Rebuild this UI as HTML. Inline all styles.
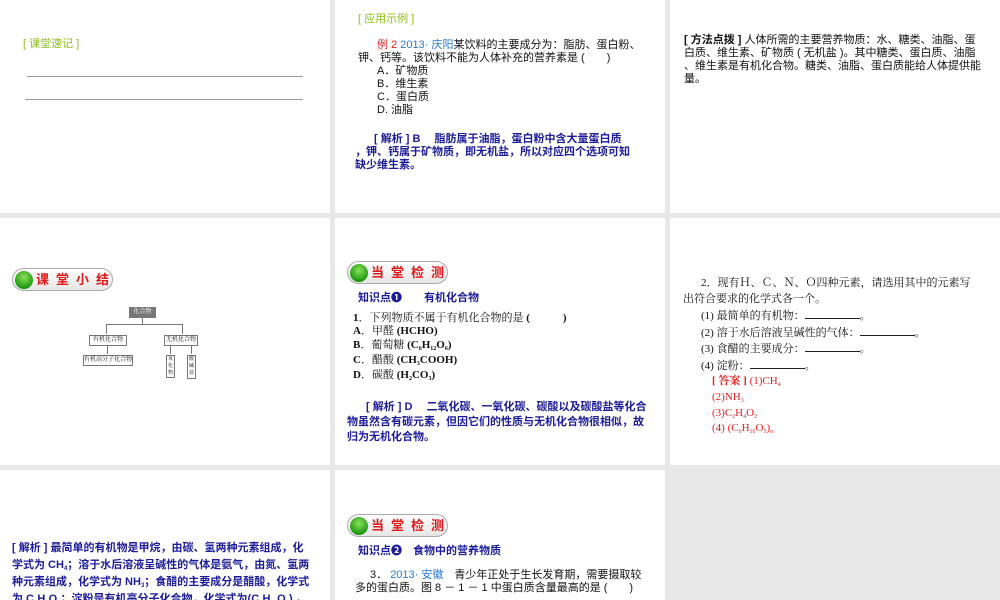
<!DOCTYPE html>
<html><head><meta charset="utf-8"><style>
*{margin:0;padding:0;box-sizing:border-box}
body{width:1000px;height:600px;background:#e8e8e8;position:relative;overflow:hidden;font-family:"Liberation Sans","Noto Sans CJK SC",sans-serif;font-size:11px;color:#111}
.s{position:absolute;background:#fff;overflow:hidden}
.t{position:absolute;white-space:nowrap;line-height:13px}
.b{color:#1c1c99;font-weight:bold}
.r{color:#e02020}
.g{color:#8cc21a}
.bl{color:#2a78d0}
.badge{position:absolute;width:101px;height:23px;border:1px solid #aaa;border-radius:12px;background:linear-gradient(#fff,#e6e6e6)}
.badge .c{position:absolute;left:2px;top:2px;width:18px;height:18px;border-radius:50%;background:radial-gradient(circle at 50% 35%,#8be05a,#1f9a10 70%,#0d6a08)}
.badge span{position:absolute;left:23px;top:3px;color:#e01818;font-weight:bold;font-size:13px;letter-spacing:7px;line-height:16px;white-space:nowrap}
.box{position:absolute;border:1px solid #777;font-size:6px;text-align:center;line-height:8px;background:#fff;font-family:"Liberation Serif","Noto Serif CJK SC",serif;white-space:nowrap}
.ln{position:absolute;background:#777}
sub{font-size:6px;vertical-align:-2px}
u{text-decoration:none;border-bottom:1px solid #222;display:inline-block;width:55px;height:10px}
</style></head><body>
<!-- slide 1 -->
<div class="s" style="left:0;top:0;width:330px;height:213px">
<div class="t g" style="left:23px;top:38px">[ 课堂速记 ]</div>
<div style="position:absolute;left:27px;top:76px;width:276px;height:1px;background:#999"></div>
<div style="position:absolute;left:25px;top:99px;width:278px;height:1px;background:#999"></div>
</div>
<!-- slide 2 -->
<div class="s" style="left:335px;top:0;width:330px;height:213px">
<div class="t g" style="left:23px;top:13px">[ 应用示例 ]</div>
<div class="t" style="left:42px;top:39px"><span class="r">例 2</span> <span class="bl">2013· 庆阳</span>某饮料的主要成分为：脂肪、蛋白粉、</div>
<div class="t" style="left:23px;top:52px">钾、钙等。该饮料不能为人体补充的营养素是 (　　)</div>
<div class="t" style="left:42px;top:65px">A．矿物质</div>
<div class="t" style="left:42px;top:78px">B．维生素</div>
<div class="t" style="left:42px;top:91px">C．蛋白质</div>
<div class="t" style="left:42px;top:104px">D. 油脂</div>
<div class="t b" style="left:39px;top:133px">[ 解析 ] B　 脂肪属于油脂，蛋白粉中含大量蛋白质</div>
<div class="t b" style="left:20px;top:146px">，钾、钙属于矿物质，即无机盐，所以对应四个选项可知</div>
<div class="t b" style="left:20px;top:159px">缺少维生素。</div>
</div>
<!-- slide 3 -->
<div class="s" style="left:670px;top:0;width:330px;height:213px">
<div class="t" style="left:14px;top:34px"><b>[ 方法点拨 ]</b>  人体所需的主要营养物质：水、糖类、油脂、蛋</div>
<div class="t" style="left:14px;top:47px">白质、维生素、矿物质 ( 无机盐 )。其中糖类、蛋白质、油脂</div>
<div class="t" style="left:14px;top:60px">、维生素是有机化合物。糖类、油脂、蛋白质能给人体提供能</div>
<div class="t" style="left:14px;top:73px">量。</div>
</div>
<!-- slide 4 -->
<div class="s" style="left:0;top:218px;width:330px;height:247px">
<div class="badge" style="left:12px;top:50px"><div class="c"></div><span>课堂小结</span></div>
<div class="box" style="left:129px;top:89px;width:27px;height:11px;background:#777;color:#fff">化合物</div>
<div class="ln" style="left:142px;top:100px;width:1px;height:6px"></div>
<div class="ln" style="left:106px;top:106px;width:76px;height:1px"></div>
<div class="ln" style="left:106px;top:106px;width:1px;height:10px"></div>
<div class="ln" style="left:182px;top:106px;width:1px;height:10px"></div>
<div class="box" style="left:89px;top:117px;width:38px;height:11px">有机化合物</div>
<div class="box" style="left:164px;top:117px;width:34px;height:11px">无机化合物</div>
<div class="ln" style="left:107px;top:128px;width:1px;height:8px"></div>
<div class="box" style="left:83px;top:137px;width:50px;height:11px">有机高分子化合物</div>
<div class="ln" style="left:170px;top:128px;width:1px;height:8px"></div>
<div class="ln" style="left:191px;top:128px;width:1px;height:8px"></div>
<div class="box" style="left:166px;top:137px;width:9px;height:23px;font-size:5px;line-height:7px;white-space:normal">氧化物</div>
<div class="box" style="left:187px;top:137px;width:9px;height:24px;font-size:5px;line-height:7px;white-space:normal">酸碱盐</div>
</div>
<!-- slide 5 -->
<div class="s" style="left:335px;top:218px;width:330px;height:247px">
<div class="badge" style="left:12px;top:43px"><div class="c"></div><span>当堂检测</span></div>
<div class="t b" style="left:23px;top:74px">知识点❶　　有机化合物</div>
<div class="t" style="left:18px;top:94px;font-family:'Liberation Serif','Noto Serif CJK SC',serif"><b>1</b>．下列物质不属于有机化合物的是 <b>(　　　)</b></div>
<div class="t" style="left:18px;top:107px;font-family:'Liberation Serif','Noto Serif CJK SC',serif"><b>A</b>．甲醛 <b>(HCHO)</b></div>
<div class="t" style="left:18px;top:121px;font-family:'Liberation Serif','Noto Serif CJK SC',serif"><b>B</b>．葡萄糖 <b>(C<sub>6</sub>H<sub>12</sub>O<sub>6</sub>)</b></div>
<div class="t" style="left:18px;top:136px;font-family:'Liberation Serif','Noto Serif CJK SC',serif"><b>C</b>．醋酸 <b>(CH<sub>3</sub>COOH)</b></div>
<div class="t" style="left:18px;top:151px;font-family:'Liberation Serif','Noto Serif CJK SC',serif"><b>D</b>．碳酸 <b>(H<sub>2</sub>CO<sub>3</sub>)</b></div>
<div class="t b" style="left:31px;top:183px">[ 解析 ] D　 二氧化碳、一氧化碳、碳酸以及碳酸盐等化合</div>
<div class="t b" style="left:12px;top:198px">物虽然含有碳元素，但因它们的性质与无机化合物很相似，故</div>
<div class="t b" style="left:12px;top:213px">归为无机化合物。</div>
</div>
<!-- slide 6 -->
<div class="s" style="left:670px;top:218px;width:330px;height:247px;font-family:'Liberation Serif','Noto Serif CJK SC',serif">
<div class="t" style="left:31px;top:59px">2．现有Ｈ、Ｃ、Ｎ、Ｏ四种元素，请选用其中的元素写</div>
<div class="t" style="left:13px;top:75px">出符合要求的化学式各一个。</div>
<div class="t" style="left:31px;top:91px">(1) 最简单的有机物：<u></u>。</div>
<div class="t" style="left:31px;top:108px">(2) 溶于水后溶液呈碱性的气体：<u></u>。</div>
<div class="t" style="left:31px;top:124px">(3) 食醋的主要成分：<u></u>。</div>
<div class="t" style="left:31px;top:141px">(4) 淀粉：<u></u>。</div>
<div class="t r" style="left:42px;top:157px"><b>[ 答案 ]</b> (1)CH<sub>4</sub></div>
<div class="t r" style="left:42px;top:173px">(2)NH<sub>3</sub></div>
<div class="t r" style="left:42px;top:189px">(3)C<sub>2</sub>H<sub>4</sub>O<sub>2</sub></div>
<div class="t r" style="left:42px;top:204px">(4) (C<sub>6</sub>H<sub>10</sub>O<sub>5</sub>)<sub><i>n</i></sub></div>
</div>
<!-- slide 7 -->
<div class="s" style="left:0;top:470px;width:330px;height:130px">
<div class="t b" style="left:12px;top:72px">[ 解析 ] 最简单的有机物是甲烷，由碳、氢两种元素组成，化</div>
<div class="t b" style="left:12px;top:89px">学式为 CH<sub>4</sub>；溶于水后溶液呈碱性的气体是氨气，由氮、氢两</div>
<div class="t b" style="left:12px;top:106px">种元素组成，化学式为 NH<sub>3</sub>；食醋的主要成分是醋酸，化学式</div>
<div class="t b" style="left:12px;top:123px">为 C<sub>2</sub>H<sub>4</sub>O<sub>2</sub>；淀粉是有机高分子化合物，化学式为(C<sub>6</sub>H<sub>10</sub>O<sub>5</sub>)<sub>n</sub>。</div>
</div>
<!-- slide 8 -->
<div class="s" style="left:335px;top:470px;width:330px;height:130px">
<div class="badge" style="left:12px;top:44px"><div class="c"></div><span>当堂检测</span></div>
<div class="t b" style="left:23px;top:75px">知识点❷　食物中的营养物质</div>
<div class="t" style="left:35px;top:99px">3． <span class="bl">2013· 安徽</span>　青少年正处于生长发育期，需要摄取较</div>
<div class="t" style="left:20px;top:112px">多的蛋白质。图 8 － 1 － 1 中蛋白质含量最高的是 (　　)</div>
</div>
</body></html>
